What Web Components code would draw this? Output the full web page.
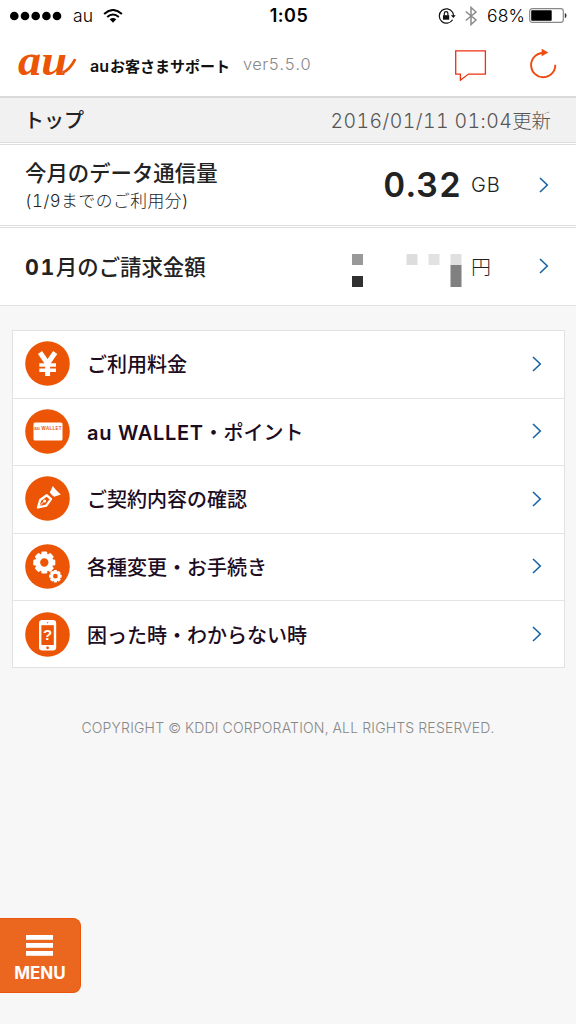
<!DOCTYPE html>
<html lang="ja">
<head>
<meta charset="utf-8">
<meta name="viewport" content="width=device-width, initial-scale=1">
<title>auお客さまサポート</title>
<style>
    body{
        margin: 0;
        min-height: 1024px;
        background-color: #f7f7f7;
        color: #222;
        font-family: Inter, "Noto Sans CJK JP", sans-serif;
        font-variant-numeric: tabular-nums;
        -webkit-font-smoothing: antialiased;
    }
</style>
</head>
<body>
<support-app></support-app>

<script>
class BaseElement extends HTMLElement
{
    constructor(){
        super();
        this.attachShadow({mode:"open"});
    }

    connectedCallback(){
        const template = document.createElement("template");
        template.innerHTML = `
            <style>
                *{ box-sizing: border-box; }
                svg{ display: block; flex: none; }
                ${this.getStyles()}
            </style>
            ${this.getTemplate()}
        `;
        this.shadowRoot.replaceChildren(template.content.cloneNode(true));
    }
}

class StatusBar extends BaseElement
{
    getTemplate(){
        return `
            <div class="side">
                <svg width="52" height="10"><g fill="#000">
                    <circle cx="4.3" cy="5" r="4.3"/><circle cx="15" cy="5" r="4.3"/><circle cx="25.7" cy="5" r="4.3"/>
                    <circle cx="36.4" cy="5" r="4.3"/><circle cx="47" cy="5" r="4.3"/></g></svg>
                <span class="carrier">au</span>
                <svg width="20" height="14" viewBox="0 0 20 14" fill="none" stroke="#000" stroke-width="2">
                    <path d="M1.1 5Q10-3 18.9 5M4.2 8Q10 3 15.8 8"/>
                    <path d="M6.7 10.3Q10 7.6 13.3 10.3L10 13.7Z" fill="#000" stroke="none"/></svg>
            </div>
            <span class="time">1:05</span>
            <div class="side side--right">
                <svg class="lock" width="18" height="16" viewBox="0 0 18 16">
                    <path d="M14.6 4.2A7.2 7.2 0 1 0 14.6 11.8M14.6 4.2Q15.5 6 15.4 8" fill="none" stroke="#111" stroke-width="1.2"/>
                    <path d="M12.9 7.2H17.7L15.3 10Z" fill="#111"/>
                    <path d="M5 7.2H11.2V11.7H5Z" fill="#111"/>
                    <path d="M6.3 7.5V5.5a1.8 1.8 0 0 1 3.6 0V7.5" fill="none" stroke="#111" stroke-width="1.2"/></svg>
                <svg class="bluetooth" width="12" height="20" viewBox="0 0 12 20">
                    <path d="M.7 5.5L11 14L6 18.6V1.4L11 6L.7 14.5" fill="none" stroke="#8c8c8c" stroke-width="1.5"/></svg>
                <span class="percent">68%</span>
                <svg width="38" height="15" viewBox="0 0 38 15">
                    <rect x=".7" y=".7" width="33.6" height="13.6" rx="2.5" fill="none" stroke="#888" stroke-width="1.2"/>
                    <rect x="2.2" y="2.2" width="20.5" height="10.6" rx=".8"/>
                    <path d="M35.8 5Q37.5 5 37.5 7.5T35.8 10Z" fill="#333"/></svg>
            </div>
        `;
    }

    getStyles(){
        return `
            :host{
                display: grid;
                grid-template-columns: 1fr auto 1fr;
                align-items: center;
                height: 32px;
                padding: 0 9px 1px 10px;
                color: #000;
                font-variant-numeric: normal;
            }
            .side{ display: flex; align-items: center; }
            .side--right{ justify-content: flex-end; }
            .carrier{ font-size: 17.5px; font-weight: 300; margin: 0 10px 0 11px; letter-spacing: .1px; }
            .time{ font-size: 18px; font-weight: 600; letter-spacing: .5px; margin-left: 1px; }
            .percent{ font-size: 17.5px; font-weight: 350; margin: 0 4px 0 10px; letter-spacing: .1px; }
            .bluetooth{ margin-left: 9px; }
        `;
    }
}
customElements.define('status-bar',StatusBar);

class AppHeader extends BaseElement
{
    getTemplate(){
        return `
            <svg class="logo" width="60" height="60" viewBox="0 0 60 60" fill="#eb5505">
                <text x="1" y="40.5" font-family="Liberation Serif" font-weight="bold" font-style="italic" font-size="44" textLength="49" lengthAdjust="spacingAndGlyphs">au</text>
                <path d="M45.5 38.6Q52.5 36.5 58.2 25.2" fill="none" stroke="#eb5505" stroke-width="2.8"/>
            </svg>
            <h1><span>au</span>お客さまサポート</h1>
            <span class="version"><slot name="version"></slot></span>
            <svg width="34" height="34" viewBox="0 0 34 34" fill="none" stroke="#ee3010" stroke-width="1.3">
                <path d="M1.7 3.8H31.4V27.1H14.5L6.4 33.2V27.1H1.7Z"/></svg>
            <svg class="reload" width="28" height="34" viewBox="0 0 28 34">
                <path d="M14 6A12.1 12.1 0 1 0 26.3 17.7" fill="none" stroke="#ee4b12" stroke-width="1.9"/>
                <path d="M12.6 1.7L19.4 5.5L12.6 9.3Z" fill="#ee4b12"/></svg>
        `;
    }

    getStyles(){
        return `
            :host{
                display: flex;
                align-items: center;
                height: 66px;
                padding: 0 19px 0 17px;
                border-bottom: 2px solid #d9d9d9;
            }
            h1{
                margin: 2px 0 0 13px;
                font-size: 15px;
                font-weight: 700;
                color: #111;
                white-space: nowrap;
            }
            h1 span{ font-size: 16px; font-weight: 600; margin-right: 1px; }
            .version{ flex: 1; margin-left: 13px; font-size: 16.5px; font-weight: 300; color: #888; letter-spacing: .4px; }
            .reload{ margin-left: 41px; }
        `;
    }
}
customElements.define('app-header',AppHeader);

class PageTitle extends BaseElement
{
    getTemplate(){
        return `<h2><slot></slot></h2><time><slot name="updated"></slot></time>`;
    }

    getStyles(){
        return `
            :host{
                display: flex;
                justify-content: space-between;
                align-items: center;
                height: 44px;
                padding: 0 25px 1px 24px;
                background-color: #f1f1f1;
            }
            h2{ margin: 0; font-size: 20px; font-weight: 500; }
            time{ font-size: 19.4px; font-weight: 300; color: #555; }
            ::slotted(.date){ letter-spacing: .45px; }
        `;
    }
}
customElements.define('page-title',PageTitle);

class ArrowIcon extends BaseElement
{
    getTemplate(){
        return `<svg width="10" height="16" viewBox="0 0 10 16" fill="none" stroke="#1964a8" stroke-width="1.6"><path d="M1 1L8.3 8L1 15"/></svg>`;
    }

    getStyles(){
        return `:host{ display: block; flex: none; }`;
    }
}
customElements.define('arrow-icon',ArrowIcon);

class UsageRow extends BaseElement
{
    getTemplate(){
        return `
            <div class="label"><h3><slot></slot></h3><slot name="note"></slot></div>
            <slot name="value"></slot>
            <span class="unit">${this.getAttribute("unit")}</span>
            <arrow-icon></arrow-icon>
        `;
    }

    getStyles(){
        return `
            :host{
                display: flex;
                align-items: center;
                padding: 0 27px 1px 25px;
                background-color: #fff;
                border-top: 1px solid #dedede;
            }
            .label{ flex: 1; padding-top: 2px; }
            h3{
                margin: 0;
                font-size: 21.4px;
                line-height: 29px;
                font-weight: 500;
            }
            ::slotted(b){ font-weight: 650; letter-spacing: 1.6px; }
            ::slotted([slot=note]){ display: block; margin-bottom: -3px; font-size: 16.8px; line-height: 27px; font-weight: 300; letter-spacing: .5px; }
            ::slotted([slot=value]){ font-size: 34px; font-weight: 600; letter-spacing: .9px; }
            .unit{ width: 68px; margin-left: 9px; font-size: 20px; font-weight: 300; letter-spacing: 1px; }
        `;
    }
}
customElements.define('usage-row',UsageRow);

class MaskedAmount extends BaseElement
{
    // blocks are cells of an 11px grid
    getTemplate(){
        return `
            <svg width="110" height="33">
                <rect x="0" y="0" width="11" height="11" fill="#999"/>
                <rect x="0" y="22" width="11" height="11" fill="#303030"/>
                <rect x="54.5" y="0" width="11" height="11" fill="#ddd"/>
                <rect x="76.5" y="0" width="11" height="11" fill="#e2e2e2"/>
                <rect x="98.5" y="0" width="11" height="11" fill="#e0e0e0"/>
                <rect x="98.5" y="11" width="11" height="22" fill="#808080"/>
            </svg>
        `;
    }

    getStyles(){
        return `:host{ display: block; padding-top: 9px; }`;
    }
}
customElements.define('masked-amount',MaskedAmount);

const gear = (teeth, r) => {
    let rects = "";
    for(let i = 0; i < teeth; i++){
        rects += `<rect x="${-r * 0.27}" y="${-r}" width="${r * 0.54}" height="${r * 0.5}" rx="${r * 0.12}" fill="#fff" stroke="none" transform="rotate(${i * 360 / teeth})"/>`;
    }
    return `${rects}<circle r="${r * 0.6}" fill="none" stroke="#fff" stroke-width="${r * 0.44}"/>`;
};

const icons = {
    yen: `<path d="M15 11.5L22.6 22.5L30.2 11.5M22.6 22V35" fill="none" stroke="#fff" stroke-width="5"/>
        <path d="M14.3 24H31M14.3 29.3H31" stroke="#fff" stroke-width="3.4"/>`,
    wallet: `<rect x="8.5" y="13.5" width="29" height="18" rx="1.5" fill="#fff"/>
        <text x="9.2" y="20.8" font-family="Liberation Sans" font-weight="bold" font-size="4.5" fill="#eb5505" textLength="27.4">au WALLET</text>`,
    pen: `<path d="M13 31.5L15.2 24L21.8 19.3L26 23.2L21.3 29.7Z" fill="none" stroke="#fff" stroke-width="2.3" stroke-linejoin="round"/>
        <path d="M13.4 31.2L19 25.4" stroke="#fff" stroke-width="1"/><circle cx="19.6" cy="25" r="1.5" fill="#fff"/>
        <path d="M24.8 16.5L27.8 10Q31 14.8 35.8 18.4L29.2 20.7Q26.4 19 24.8 16.5Z" fill="#fff"/>`,
    gears: `<g transform="translate(19.3 18.5)">${gear(8, 11)}</g><g transform="translate(30.4 32.2)">${gear(8, 6.2)}</g>`,
    phone: `<rect x="14" y="8" width="17.2" height="30.5" rx="3.2" fill="#fff"/><rect x="16.4" y="13.2" width="12.4" height="19.8" fill="#eb5505"/>
        <circle cx="22.6" cy="35.8" r="1.4" fill="#eb5505"/><circle cx="22.6" cy="10.7" r=".6" fill="#eb5505"/>
        <text x="22.6" y="28.4" text-anchor="middle" font-family="Liberation Sans" font-weight="bold" font-size="15" fill="#fff">?</text>`
};

class MenuItem extends BaseElement
{
    getTemplate(){
        return `
            <svg width="45" height="45" viewBox="0 0 45 45"><circle cx="22.5" cy="22.5" r="22.3" fill="#eb5505"/>${icons[this.getAttribute("icon")]}</svg>
            <span><slot></slot></span>
            <arrow-icon></arrow-icon>
        `;
    }

    getStyles(){
        return `
            :host{
                display: flex;
                align-items: center;
                height: 67.5px;
                padding: 0 22px 1px 12px;
                border-bottom: 1px solid #e4e4e4;
                color: #1c0c1e;
            }
            :host(:last-of-type){ height: 66px; border-bottom: 0; padding-bottom: 0; }
            span{ flex: 1; margin-left: 17px; font-size: 20px; font-weight: 500; }
            ::slotted(b){ font-weight: 600; letter-spacing: .65px; }
        `;
    }
}
customElements.define('menu-item',MenuItem);

class MenuButton extends BaseElement
{
    getTemplate(){
        return `
            <svg width="28" height="21" fill="#fff"><rect width="27" height="4.8"/><rect y="8" width="27" height="4.8"/><rect y="16" width="27" height="4.8"/></svg>
            <slot></slot>
        `;
    }

    getStyles(){
        return `
            :host{
                position: fixed;
                left: 0;
                bottom: 31px;
                width: 81px;
                height: 75px;
                display: flex;
                flex-direction: column;
                align-items: center;
                padding-top: 16px;
                gap: 8px;
                background-color: #eb661e;
                border: 1px solid #ea560a;
                border-left: 0;
                border-radius: 0 8px 8px 0;
                color: #fff;
                font: 700 17px/19px Inter, sans-serif;
            }
        `;
    }
}
customElements.define('menu-button',MenuButton);

class SupportApp extends BaseElement
{
    getTemplate(){
        return `
            <div class="top">
                <status-bar></status-bar>
                <app-header><span slot="version">ver5.5.0</span></app-header>
            </div>
            <page-title>トップ<span slot="updated" class="date">2016/01/11 01:04</span><span slot="updated">更新</span></page-title>
            <section>
                <usage-row class="data" unit="GB">今月のデータ通信量
                    <span slot="note">(1/9までのご利用分)</span>
                    <span slot="value">0.32</span>
                </usage-row>
                <usage-row class="bill" unit="円"><b>01</b>月のご請求金額
                    <masked-amount slot="value"></masked-amount>
                </usage-row>
            </section>
            <nav>
                <menu-item icon="yen">ご利用料金</menu-item>
                <menu-item icon="wallet"><b>au WALLET</b>・ポイント</menu-item>
                <menu-item icon="pen">ご契約内容の確認</menu-item>
                <menu-item icon="gears">各種変更・お手続き</menu-item>
                <menu-item icon="phone">困った時・わからない時</menu-item>
            </nav>
            <footer>COPYRIGHT © KDDI CORPORATION, ALL RIGHTS RESERVED.</footer>
            <menu-button>MENU</menu-button>
        `;
    }

    getStyles(){
        return `
            :host{ display: block; }
            .top{ background-color: #fff; }
            section{
                display: flex;
                flex-direction: column;
                gap: 1px;
                padding-top: 1px;
                border-top: 1px solid #dedede;
                background-color: #fff;
                border-bottom: 1px solid #e2e2e2;
            }
            .data{ height: 82px; border-bottom: 1px solid #dedede; }
            .bill{ height: 78px; }
            nav{
                margin: 24px 11px 0 12px;
                border: 1px solid #e2e2e2;
                background-color: #fff;
            }
            footer{
                margin-top: 50px;
                text-align: center;
                font-size: 14px;
                line-height: 20px;
                font-weight: 300;
                color: #888;
                letter-spacing: .18px;
                white-space: nowrap;
            }
        `;
    }
}
customElements.define('support-app',SupportApp);
</script>
</body>
</html>
